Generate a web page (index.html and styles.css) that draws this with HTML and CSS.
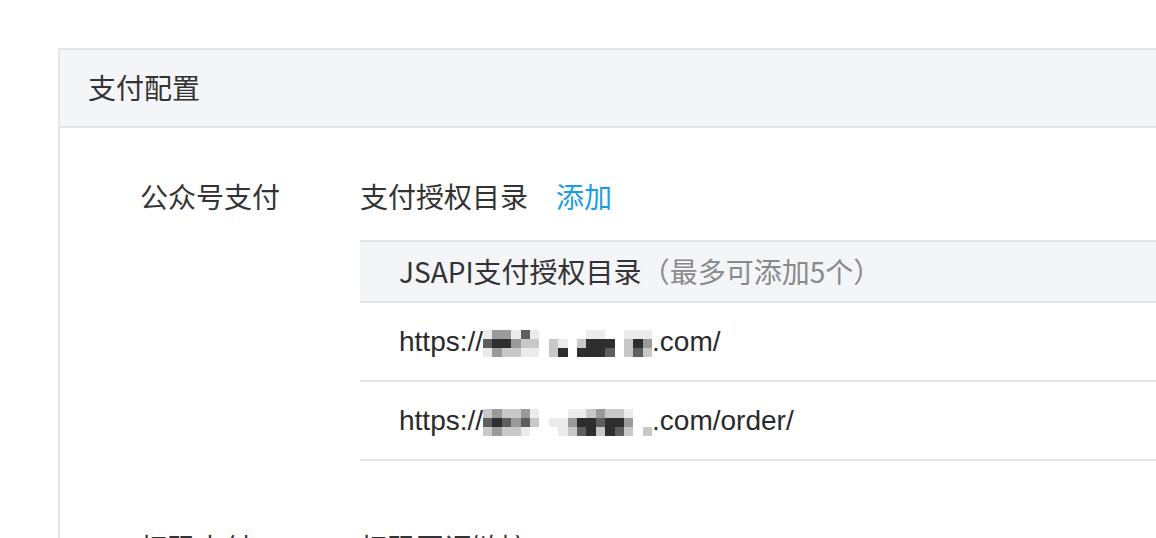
FILE: index.html
```html
<!DOCTYPE html>
<html lang="zh-CN">
<head>
<meta charset="utf-8">
<title>支付配置</title>
<link rel="stylesheet" href="styles.css">
</head>
<body>
<div class="page">
  <section class="panel">
    <header class="panel-head">支付配置</header>
    <div class="panel-body">
      <div class="row">
        <div class="label">公众号支付</div>
        <div class="content">
          <div class="title">支付授权目录<a class="add" href="#">添加</a></div>
          <div class="table">
            <div class="th">JSAPI支付授权目录<span class="muted">（最多可添加5个）</span></div>
            <div class="tr">
              <span class="url">https://<span class="mosaic">
                <i class="s1"></i><i class="s3"></i><i class="s3"></i><i class="s1"></i><i class="s4"></i><i class="s1"></i><i class="s0"></i><i class="s0"></i><i class="s0"></i><i class="s0"></i><i class="s0"></i><i class="s1"></i><i class="s1"></i><i class="s0"></i><i class="s0"></i><i class="s1"></i><i class="s1"></i><i class="s1"></i>
                <i class="s4"></i><i class="s5"></i><i class="s5"></i><i class="s3"></i><i class="s2"></i><i class="s2"></i><i class="s0"></i><i class="s2"></i><i class="s1"></i><i class="s0"></i><i class="s2"></i><i class="s5"></i><i class="s5"></i><i class="s5"></i><i class="s0"></i><i class="s2"></i><i class="s5"></i><i class="s3"></i>
                <i class="s1"></i><i class="s3"></i><i class="s2"></i><i class="s2"></i><i class="s1"></i><i class="s1"></i><i class="s0"></i><i class="s2"></i><i class="s5"></i><i class="s0"></i><i class="s5"></i><i class="s5"></i><i class="s5"></i><i class="s4"></i><i class="s0"></i><i class="s2"></i><i class="s4"></i><i class="s2"></i>
              </span>.com/</span>
            </div>
            <div class="tr">
              <span class="url">https://<span class="mosaic">
                <i class="s2"></i><i class="s3"></i><i class="s2"></i><i class="s2"></i><i class="s3"></i><i class="s1"></i><i class="s0"></i><i class="s0"></i><i class="s0"></i><i class="s1"></i><i class="s1"></i><i class="s2"></i><i class="s3"></i><i class="s2"></i><i class="s2"></i><i class="s1"></i><i class="s0"></i><i class="s0"></i>
                <i class="s4"></i><i class="s5"></i><i class="s4"></i><i class="s3"></i><i class="s4"></i><i class="s2"></i><i class="s0"></i><i class="s1"></i><i class="s1"></i><i class="s3"></i><i class="s5"></i><i class="s5"></i><i class="s4"></i><i class="s5"></i><i class="s5"></i><i class="s3"></i><i class="s0"></i><i class="s0"></i>
                <i class="s2"></i><i class="s3"></i><i class="s2"></i><i class="s2"></i><i class="s1"></i><i class="s0"></i><i class="s0"></i><i class="s0"></i><i class="s1"></i><i class="s2"></i><i class="s4"></i><i class="s5"></i><i class="s2"></i><i class="s5"></i><i class="s4"></i><i class="s2"></i><i class="s0"></i><i class="s2"></i>
              </span>.com/order/</span>
            </div>
          </div>
        </div>
      </div>
      <div class="row">
        <div class="label">扫码支付</div>
        <div class="content">
          <div class="title">扫码回调链接</div>
        </div>
      </div>
    </div>
  </section>
</div>
</body>
</html>
```

FILE: styles.css
```css
html, body {
  margin: 0;
  padding: 0;
  background: #ffffff;
}

body {
  width: 1156px;
  height: 538px;
  overflow: hidden;
  font-family: "Noto Sans CJK SC", "Liberation Sans", sans-serif;
  font-size: 28px;
  color: #333333;
}

.page {
  padding: 48px 0 0 58px;
}

.panel {
  width: 1200px;
  border: 2px solid #e4e5ea;
  border-bottom: none;
  box-sizing: border-box;
  min-height: 600px;
}

.panel-head {
  height: 78px;
  box-sizing: border-box;
  background: #f4f5f9;
  border-bottom: 2px solid #e4e5ea;
  padding-left: 28px;
  padding-bottom: 3px;
  display: flex;
  align-items: center;
  line-height: 40px;
}

.panel-body {
  padding: 48px 0 0 80px;
  display: flex;
  flex-direction: column;
  gap: 66px;
}

.row {
  display: flex;
  line-height: 40px;
}

.label {
  width: 220px;
  flex: none;
}

.content {
  flex: 1;
}

.title {
  height: 40px;
}

.add {
  margin-left: 28px;
  color: #1a9ee2;
  text-decoration: none;
}

.table {
  margin-top: 24px;
  border-top: 2px solid #e4e5ea;
}

.th {
  height: 61px;
  box-sizing: border-box;
  background: #f4f5f9;
  border-bottom: 2px solid #e4e5ea;
  padding-left: 39px;
  padding-bottom: 2px;
  display: flex;
  align-items: center;
}

.muted {
  color: #8a8a8a;
}

.tr {
  height: 77px;
  border-bottom: 2px solid #e4e5ea;
  padding-left: 39px;
  display: flex;
  align-items: center;
  font-family: "Liberation Sans", "Noto Sans CJK SC", sans-serif;
  color: #2a2a2a;
}

.url {
  display: inline-flex;
  align-items: center;
}

.mosaic {
  display: inline-grid;
  grid-template-columns: repeat(18, 9.4px);
  grid-auto-rows: 9px;
  margin-top: 4px;
}

.mosaic i {
  display: block;
}

.s0 { background: #ffffff; }
.s1 { background: #ebebeb; }
.s2 { background: #c8c8c8; }
.s3 { background: #9a9a9a; }
.s4 { background: #5e5e5e; }
.s5 { background: #2e2e2e; }
```
